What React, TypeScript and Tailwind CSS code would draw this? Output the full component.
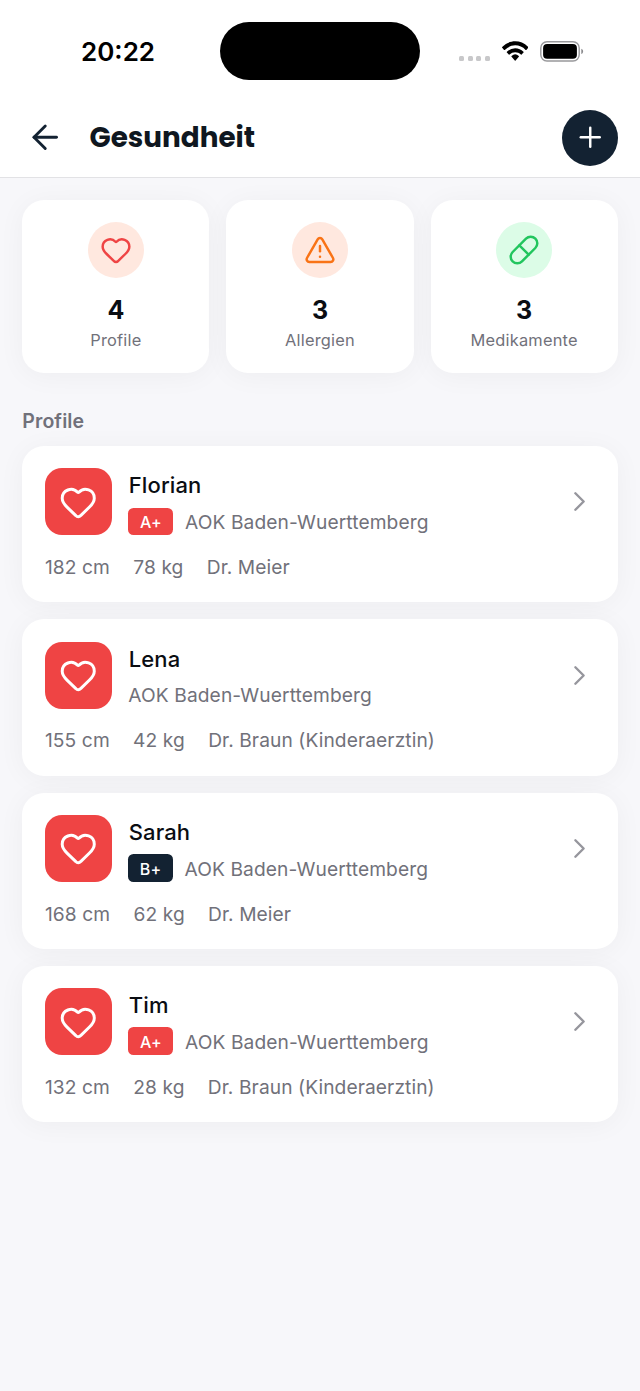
import type { ReactNode } from 'react';
import { ArrowLeft, ChevronRight, Heart, Pill, Plus, TriangleAlert } from 'lucide-react';

interface Profile {
  name: string;
  bloodType?: string;
  badgeClass?: string;
  insurance: string;
  facts: string[];
}

const PROFILES: Profile[] = [
  {
    name: 'Florian',
    bloodType: 'A+',
    badgeClass: 'bg-[#ef4444] w-[45.2px]',
    insurance: 'AOK Baden-Wuerttemberg',
    facts: ['182 cm', '78 kg', 'Dr. Meier'],
  },
  {
    name: 'Lena',
    insurance: 'AOK Baden-Wuerttemberg',
    facts: ['155 cm', '42 kg', 'Dr. Braun (Kinderaerztin)'],
  },
  {
    name: 'Sarah',
    bloodType: 'B+',
    badgeClass: 'bg-[#132232] w-[44.7px]',
    insurance: 'AOK Baden-Wuerttemberg',
    facts: ['168 cm', '62 kg', 'Dr. Meier'],
  },
  {
    name: 'Tim',
    bloodType: 'A+',
    badgeClass: 'bg-[#ef4444] w-[45.2px]',
    insurance: 'AOK Baden-Wuerttemberg',
    facts: ['132 cm', '28 kg', 'Dr. Braun (Kinderaerztin)'],
  },
];

function StatusBar() {
  return (
    <div className="flex h-[103px] items-start">
      <div className="w-[220px] pt-[36px] pl-[81px] text-[26px] leading-8 font-semibold text-black">
        20:22
      </div>
      <div className="mt-[22px] h-[58.3px] w-[200px] rounded-full bg-black" />
      <div className="mt-[40px] ml-[39px] flex items-start">
        <div className="mt-[16px] flex gap-[3.4px]">
          <span className="size-[5.2px] rounded-[1.5px] bg-[#c8c8ca]" />
          <span className="size-[5.2px] rounded-[1.5px] bg-[#c8c8ca]" />
          <span className="size-[5.2px] rounded-[1.5px] bg-[#c8c8ca]" />
          <span className="size-[5.2px] rounded-[1.5px] bg-[#c8c8ca]" />
        </div>
        <svg viewBox="0 0 17 11.9" preserveAspectRatio="none" className="mt-[1.3px] ml-[12px] h-[20px] w-[26.4px]" fill="#000">
          <path d="M8.5 2.6c2.5 0 4.9 1 6.7 2.7.13.13.35.13.48 0l1.2-1.25a.35.35 0 0 0 0-.5C12.2-.9 4.8-.9.12 3.55a.35.35 0 0 0 0 .5L1.32 5.3c.13.13.35.13.48 0C3.6 3.6 6 2.6 8.5 2.6Z" />
          <path d="M8.5 6.7c1.35 0 2.65.5 3.65 1.4.14.14.36.13.49 0l1.2-1.23a.36.36 0 0 0 0-.5 7.8 7.8 0 0 0-10.68 0 .36.36 0 0 0 0 .5l1.2 1.23c.13.13.35.14.49 0A5.4 5.4 0 0 1 8.5 6.7Z" />
          <path d="M10.85 9.4c.14-.14.13-.37-.01-.5a3.7 3.7 0 0 0-4.68 0 .35.35 0 0 0-.01.5l2.1 2.2c.13.14.36.14.5 0Z" />
        </svg>
        <svg viewBox="0 0 44 22" className="ml-[11.8px] h-[22px] w-[44px]">
          <rect x="0.8" y="1.8" width="38.4" height="19.2" rx="6.2" fill="none" stroke="#98989b" strokeWidth="1.4" />
          <rect x="3.1" y="4" width="33.8" height="14.8" rx="4" fill="#000" />
          <path d="M41.3 8.8c1.1.4 1.8 1.4 1.8 2.6s-.7 2.2-1.8 2.6Z" fill="#8a8a8d" />
        </svg>
      </div>
    </div>
  );
}

function StatCard({ icon, circle, value, label }: { icon: ReactNode; circle: string; value: number; label: string }) {
  return (
    <div className="flex h-[173px] flex-1 flex-col items-center rounded-[22px] bg-white pt-[22.3px] shadow-[0_3px_28px_rgba(0,0,0,0.045)]">
      <div className={`flex size-[56px] items-center justify-center rounded-full ${circle}`}>{icon}</div>
      <div className="mt-[14.5px] text-[25px] leading-[34px] font-bold text-[#0a0d12]">{value}</div>
      <div className="mt-[3px] text-[16.4px] leading-[20px] tracking-[0.22px] text-[#71717a]">{label}</div>
    </div>
  );
}

function ProfileCard({ profile }: { profile: Profile }) {
  return (
    <div className="h-[156.3px] rounded-[22px] bg-white px-[22.3px] pt-[22.3px] shadow-[0_3px_28px_rgba(0,0,0,0.045)]">
      <div className="flex h-[67px] items-center">
        <div className="flex size-[67px] items-center justify-center rounded-[17px] bg-[#ef4444]">
          <Heart strokeWidth={1.85} className="size-[38.5px] text-white" />
        </div>
        <div className="ml-[16.7px] flex flex-1 flex-col">
          <div className="pl-[0.5px] text-[22px] leading-[34px] font-medium tracking-[0.1px] text-[#0a0d12]">{profile.name}</div>
          <div className="mt-[5px] flex h-[28px] items-center">
            {profile.bloodType && (
              <span className={`mr-[11.5px] flex h-[27.8px] items-center justify-center rounded-[5.5px] pt-[1.5px] text-[16px] font-medium tracking-[0.2px] text-white ${profile.badgeClass}`}>
                {profile.bloodType}
              </span>
            )}
            <span className="pt-[1.4px] text-[19.2px] leading-[26px] tracking-[0.1px] text-[#71717a]">{profile.insurance}</span>
          </div>
        </div>
        <ChevronRight strokeWidth={1.75} className="mr-[-0.5px] size-[33px] text-[#96969d]" />
      </div>
      <div className="mt-[17.5px] flex gap-[23.3px] pl-[0.4px] text-[19.2px] leading-[28px] tracking-[0.08px] text-[#71717a]">
        {profile.facts.map((fact) => (
          <span key={fact}>{fact}</span>
        ))}
      </div>
    </div>
  );
}

export default function App() {
  return (
    <div className="min-h-[1391px] w-[640px] bg-[#f7f7fa] font-['Inter','Liberation_Sans',sans-serif]">
      <header className="h-[178px] border-b border-[#e2e2e5] bg-white">
        <StatusBar />
        <div className="flex h-[69px] items-center pr-[22px] pl-[26px]">
          <ArrowLeft strokeWidth={1.8} className="size-[38.5px] text-[#132232]" />
          <h1 className="ml-[25px] flex-1 pt-px font-['Poppins','Inter',sans-serif] text-[27.8px] font-bold text-[#0f1720]">
            Gesundheit
          </h1>
          <button className="flex size-[56px] items-center justify-center rounded-full bg-[#132232]">
            <Plus strokeWidth={1.8} className="size-[32.5px] text-white" />
          </button>
        </div>
      </header>

      <main className="px-[22.3px] pt-[22.2px]">
        <div className="flex gap-[17px]">
          <StatCard
            icon={<Heart strokeWidth={1.85} className="ml-[0.5px] size-[32px] text-[#ef4444]" />}
            circle="bg-[#ffe8df]"
            value={4}
            label="Profile"
          />
          <StatCard
            icon={<TriangleAlert strokeWidth={1.85} className="ml-[0.5px] size-[32px] text-[#f97316]" />}
            circle="bg-[#ffe8df]"
            value={3}
            label="Allergien"
          />
          <StatCard
            icon={<Pill strokeWidth={1.85} className="size-[32px] text-[#22c55e]" />}
            circle="bg-[#dcfce7]"
            value={3}
            label="Medikamente"
          />
        </div>

        <h2 className="mt-[34px] text-[19.5px] leading-[28px] font-semibold tracking-[0.1px] text-[#71717a]">Profile</h2>
        <div className="mt-[11px] flex flex-col gap-[17px]">
          {PROFILES.map((profile) => (
            <ProfileCard key={profile.name} profile={profile} />
          ))}
        </div>
      </main>
    </div>
  );
}
